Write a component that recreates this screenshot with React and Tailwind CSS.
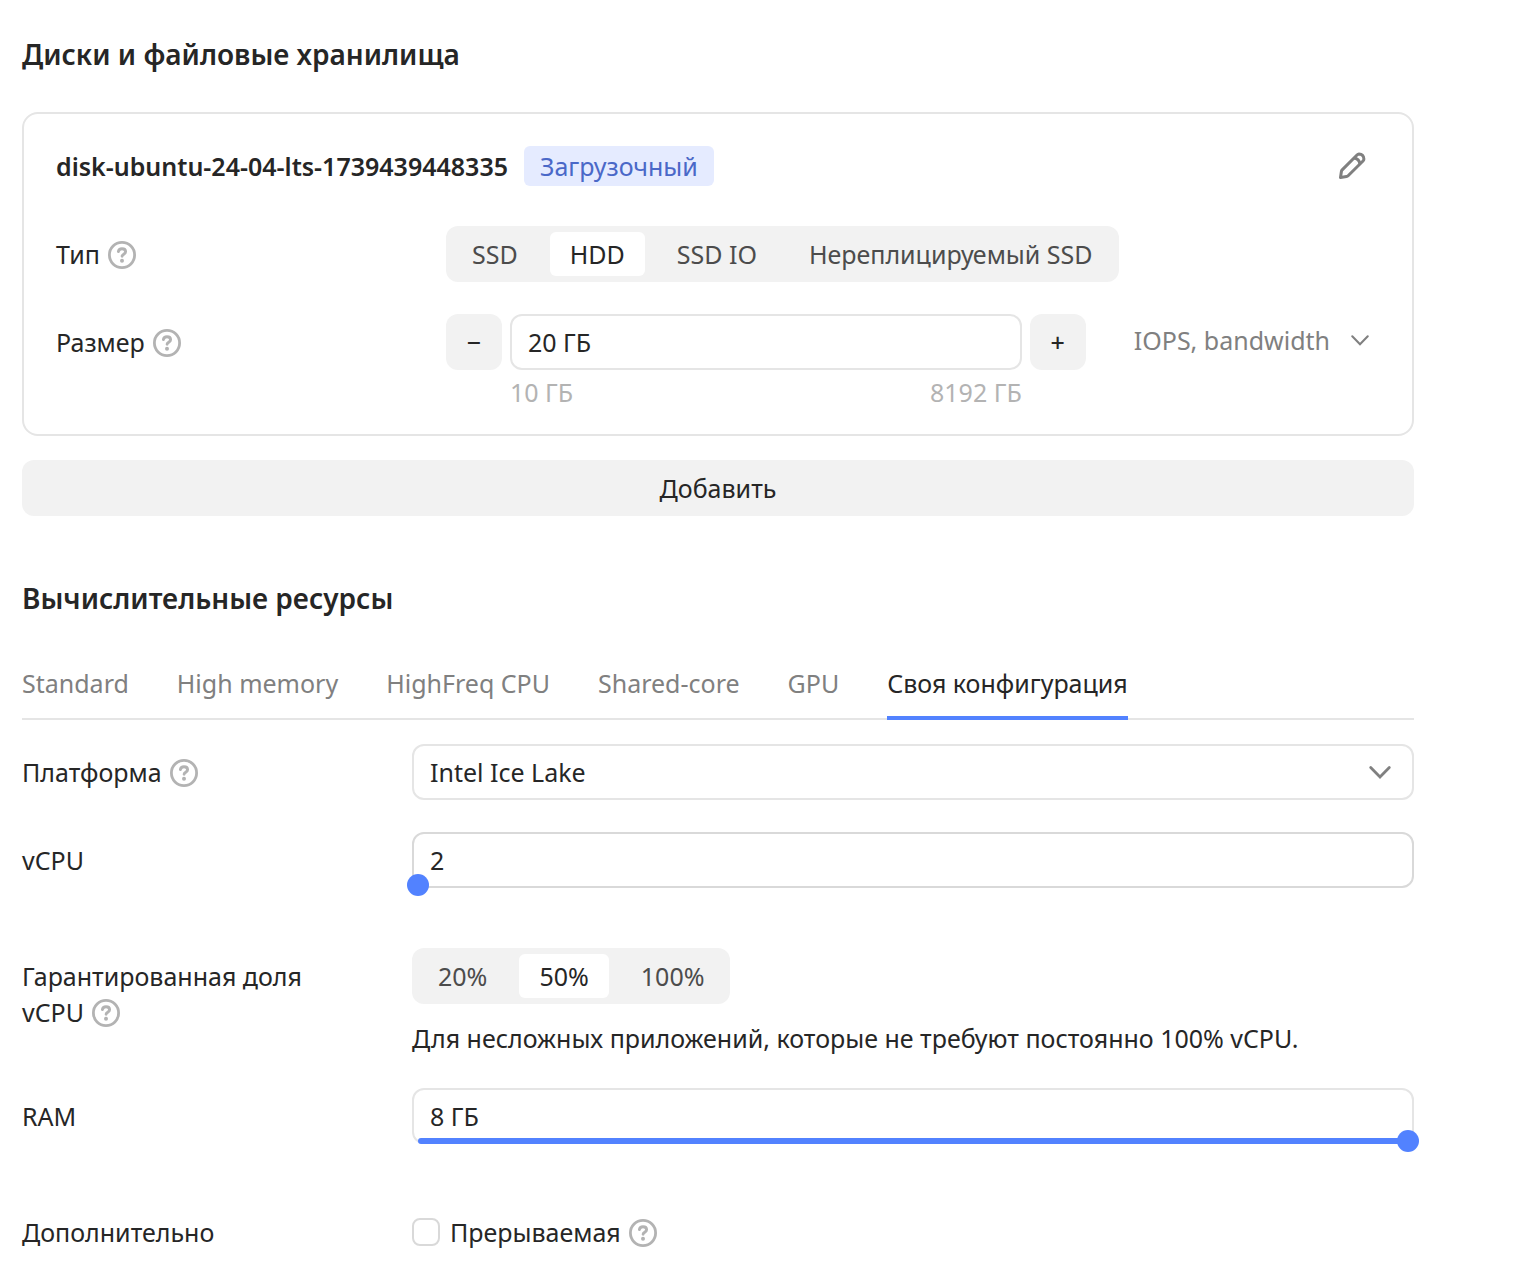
import React, { useId, useState } from "react";

function HelpButton({ label }) {
  return (
    <button type="button" aria-label={label} className="mt-0.5 inline-flex size-7 shrink-0 text-[#b3b3b3]">
      <svg viewBox="0 0 28 28" className="size-7" fill="none" stroke="currentColor" strokeWidth="2.8" aria-hidden="true">
        <circle cx="14" cy="14" r="12.6" />
        <path d="M10.4 10.6c.3-1.900 1.700-2.900 3.600-2.900 2.100 0 3.600 1.200 3.600 3 0 2.500-3.500 2.500-3.500 4.600" strokeLinecap="round" strokeWidth="2.900" />
        <circle cx="14" cy="19.800" r="2" fill="currentColor" stroke="none" />
      </svg>
    </button>
  );
}

function PencilIcon() {
  return (
    <svg viewBox="0 0 28 28" className="size-7" fill="none" stroke="currentColor" strokeWidth="3" strokeLinejoin="round" aria-hidden="true">
      <path d="M2.500 25.500l.9-6a3 3 0 0 1 .8-1.600L19 3a3 3 0 0 1 2-.9c2.800.2 4.700 2.100 4.900 4.900a3 3 0 0 1-.9 2L10.100 23.800a3 3 0 0 1-1.600.8z" />
      <path d="M15.800 6c3.300.4 5.800 2.900 6.200 6.200" />
    </svg>
  );
}

function Chevron({ className, strokeWidth }) {
  return (
    <svg viewBox="0 0 24 24" className={className} fill="none" stroke="currentColor" strokeWidth={strokeWidth} strokeLinecap="round" aria-hidden="true">
      <path d="M2.700 7.500 12 17l9.300-9.500" />
    </svg>
  );
}

function Segmented({ name, label, options, value, onChange }) {
  return (
    <div role="radiogroup" aria-label={label} className="inline-flex h-14 gap-3 rounded-xl bg-[#f2f2f2] p-1.5">
      {options.map((option) => (
        <label
          key={option}
          className="flex cursor-pointer items-center rounded-md px-5 whitespace-nowrap text-[#4c4c4c] has-checked:bg-white has-checked:text-[#262626]"
        >
          <input type="radio" name={name} checked={value === option} onChange={() => onChange(option)} className="sr-only" />
          {option}
        </label>
      ))}
    </div>
  );
}

function FieldRow({ htmlFor, label, help, children }) {
  return (
    <div className="flex items-start">
      <div className="flex w-[390px] shrink-0 items-center gap-2 pt-2.5 pr-20">
        <label htmlFor={htmlFor}>{label}</label>
        {help && <HelpButton label={help} />}
      </div>
      <div className="min-w-0 flex-1">{children}</div>
    </div>
  );
}

const inputClass = "h-14 w-full rounded-xl border-2 bg-white px-4 outline-none";

function SliderField({ id, label, text, min, max, step, value, onChange, borderClass }) {
  const share = ((value - min) / (max - min)) * 100;
  return (
    <div className="relative h-14">
      <input id={id} type="text" readOnly value={text} className={inputClass + " " + borderClass} />
      <div className="absolute inset-x-1.5 bottom-0 h-1.5">
        <div className="h-full rounded-full bg-[#5282ff]" style={{ width: `${share}%` }} />
      </div>
      <input
        type="range"
        aria-label={label}
        min={min}
        max={max}
        step={step}
        value={value}
        onChange={(e) => onChange(Number(e.target.value))}
        className="absolute -right-[5px] -bottom-2 -left-[5px] h-[22px] cursor-pointer appearance-none bg-transparent [&::-webkit-slider-thumb]:size-[22px] [&::-webkit-slider-thumb]:appearance-none [&::-webkit-slider-thumb]:rounded-full [&::-webkit-slider-thumb]:bg-[#5282ff]"
      />
    </div>
  );
}

function DiskCard() {
  const id = useId();
  const [type, setType] = useState("HDD");
  const [size, setSize] = useState(20);
  return (
    <div className="rounded-2xl border-2 border-[#e5e5e5] px-8 pt-8 pb-6">
      <div className="flex h-10 items-center">
        <h3 className="font-semibold">disk-ubuntu-24-04-lts-1739439448335</h3>
        <span className="ml-4 flex h-10 items-center rounded-md bg-[#e5ebff] px-4 text-[#4a68c8]">Загрузочный</span>
        <button type="button" aria-label="Редактировать диск" className="ml-auto flex h-10 w-14 items-center justify-center text-[#808080]">
          <PencilIcon />
        </button>
      </div>

      <div className="mt-10 flex flex-col gap-8">
        <FieldRow label="Тип" help="О типах дисков">
          <Segmented name="disk-type" label="Тип" options={["SSD", "HDD", "SSD IO", "Нереплицируемый SSD"]} value={type} onChange={setType} />
        </FieldRow>

        <FieldRow htmlFor={id} label="Размер" help="О размере диска">
          <div className="flex items-start">
            <div className="flex min-w-0 flex-1 gap-2">
              <button type="button" aria-label="Уменьшить" onClick={() => setSize(Math.max(10, size - 1))} className="h-14 w-14 shrink-0 rounded-xl bg-[#f2f2f2] font-medium">
                −
              </button>
              <div className="min-w-0 flex-1">
                <input id={id} type="text" readOnly value={`${size} ГБ`} className={inputClass + " border-[#e5e5e5]"} />
                <div className="mt-1 flex justify-between text-[#b3b3b3]">
                  <span>10 ГБ</span>
                  <span>8192 ГБ</span>
                </div>
              </div>
              <button type="button" aria-label="Увеличить" onClick={() => setSize(Math.min(8192, size + 1))} className="h-14 w-14 shrink-0 rounded-xl bg-[#f2f2f2] font-medium">
                +
              </button>
            </div>
            <button type="button" aria-expanded="false" className="ml-12 flex h-13 shrink-0 items-center gap-2.5 text-[#808080]">
              IOPS, bandwidth
              <span className="flex w-10 justify-center">
                <Chevron className="size-5" strokeWidth="2.500" />
              </span>
            </button>
          </div>
        </FieldRow>
      </div>
    </div>
  );
}

const tabs = ["Standard", "High memory", "HighFreq CPU", "Shared-core", "GPU", "Своя конфигурация"];

function Resources() {
  const [tab, setTab] = useState("Своя конфигурация");
  const [cpu, setCpu] = useState(2);
  const [share, setShare] = useState("50%");
  const [ram, setRam] = useState(8);
  return (
    <section className="mt-16">
      <h2 className="text-[28px] leading-9 font-semibold">Вычислительные ресурсы</h2>
      <div role="tablist" className="mt-12 flex h-14 gap-12 shadow-[inset_0_-2px_0_#e5e5e5]">
        {tabs.map((name) => (
          <button
            key={name}
            type="button"
            role="tab"
            aria-selected={tab === name}
            onClick={() => setTab(name)}
            className="border-b-4 border-transparent pb-3.5 whitespace-nowrap text-[#808080] aria-selected:border-[#5282ff] aria-selected:text-[#262626]"
          >
            {name}
          </button>
        ))}
      </div>

      <div className="mt-6 flex flex-col">
        <FieldRow htmlFor="platform" label="Платформа" help="О платформах">
          <div className="relative">
            <select id="platform" defaultValue="ice" className={inputClass + " appearance-none border-[#e5e5e5]"}>
              <option value="ice">Intel Ice Lake</option>
              <option value="cascade">Intel Cascade Lake</option>
            </select>
            <Chevron className="pointer-events-none absolute top-4 right-[22px] size-6 text-[#808080]" strokeWidth="2.800" />
          </div>
        </FieldRow>

        <div className="mt-8">
          <FieldRow htmlFor="vcpu" label="vCPU">
            <SliderField id="vcpu" label="Количество vCPU" text={String(cpu)} min={2} max={96} step={2} value={cpu} onChange={setCpu} borderClass="border-[#d9d9d9]" />
          </FieldRow>
        </div>

        <div className="mt-15 flex items-start">
          <div className="w-[390px] shrink-0 pt-2.5 pr-20">
            <span className="block">Гарантированная доля</span>
            <span className="flex items-center gap-2">
              vCPU
              <HelpButton label="О гарантированной доле vCPU" />
            </span>
          </div>
          <div className="min-w-0 flex-1">
            <Segmented name="cpu-share" label="Гарантированная доля vCPU" options={["20%", "50%", "100%"]} value={share} onChange={setShare} />
            <p className="mt-4">Для несложных приложений, которые не требуют постоянно 100% vCPU.</p>
          </div>
        </div>

        <div className="mt-8">
          <FieldRow htmlFor="ram" label="RAM">
            <SliderField id="ram" label="Объём RAM" text={`${ram} ГБ`} min={2} max={8} step={1} value={ram} onChange={setRam} borderClass="border-[#e5e5e5]" />
          </FieldRow>
        </div>

        <div className="mt-15">
          <FieldRow label="Дополнительно">
            <div className="flex items-center gap-2 pt-2.5">
              <label className="flex items-center gap-2.5">
                <input
                  type="checkbox"
                  className="size-7 appearance-none rounded-lg border-2 border-[#d9d9d9] bg-white checked:border-[#5282ff] checked:bg-[#5282ff]"
                />
                Прерываемая
              </label>
              <HelpButton label="О прерываемых машинах" />
            </div>
          </FieldRow>
        </div>
      </div>
    </section>
  );
}

export default function App() {
  return (
    <main className="min-h-screen bg-white pt-9 pr-28 pb-9 pl-[22px] font-['Noto_Sans',sans-serif] text-[25px] leading-9 text-[#262626]">
      <section>
        <h2 className="text-[28px] leading-9 font-semibold">Диски и файловые хранилища</h2>
        <div className="mt-10">
          <DiskCard />
        </div>
        <button type="button" className="mt-6 h-14 w-full rounded-xl bg-[#f2f2f2]">
          Добавить
        </button>
      </section>
      <Resources />
    </main>
  );
}
